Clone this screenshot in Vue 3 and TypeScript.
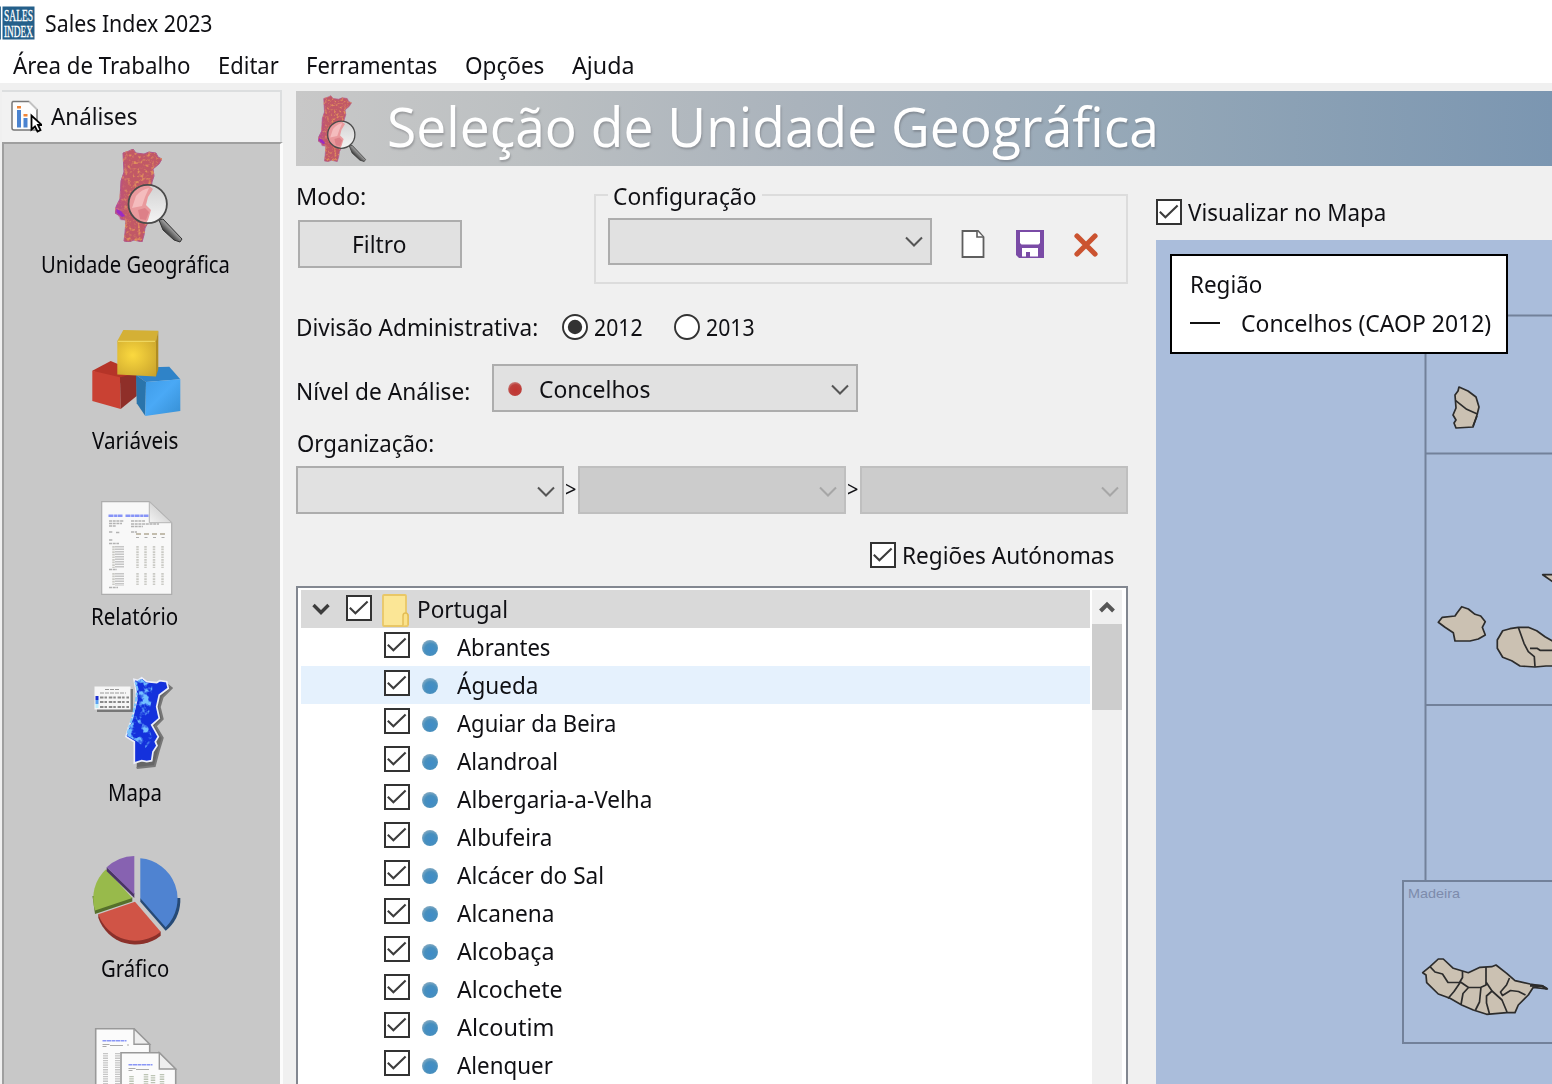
<script setup lang="ts">
import { ref } from 'vue'

interface Region {
  name: string
  width: number
}

const menus: Region[] = [
  { name: 'Área de Trabalho', width: 177 },
  { name: 'Editar', width: 60 },
  { name: 'Ferramentas', width: 130 },
  { name: 'Opções', width: 79 },
  { name: 'Ajuda', width: 61 },
]

const tools: Region[] = [
  { name: 'Unidade Geográfica', width: 187 },
  { name: 'Variáveis', width: 86 },
  { name: 'Relatório', width: 86 },
  { name: 'Mapa', width: 52 },
  { name: 'Gráfico', width: 68 },
  { name: '', width: 0 },
]

const regions: Region[] = [
  { name: 'Abrantes', width: 93 },
  { name: 'Águeda', width: 80 },
  { name: 'Aguiar da Beira', width: 158 },
  { name: 'Alandroal', width: 100 },
  { name: 'Albergaria-a-Velha', width: 194 },
  { name: 'Albufeira', width: 94 },
  { name: 'Alcácer do Sal', width: 146 },
  { name: 'Alcanena', width: 96 },
  { name: 'Alcobaça', width: 96 },
  { name: 'Alcochete', width: 105 },
  { name: 'Alcoutim', width: 96 },
  { name: 'Alenquer', width: 96 },
]

const hovered = ref('Águeda')
const year = ref('2012')

// Condenses a label so that its ink spans exactly the given width.
const vFit = {
  mounted(el: HTMLElement, binding: { value: number }) {
    if (!binding.value) return
    const ctx = document.createElement('canvas').getContext('2d')!
    const cs = getComputedStyle(el)
    ctx.font = `${cs.fontWeight} ${cs.fontSize} ${cs.fontFamily}`
    const m = ctx.measureText(el.textContent ?? '')
    const bearing = m.actualBoundingBoxLeft < 0 ? 1 : 0
    const ink = m.actualBoundingBoxLeft + m.actualBoundingBoxRight
    const scale = (binding.value - bearing) / ink
    const left = m.actualBoundingBoxLeft * scale + bearing
    el.style.transform = `scaleX(${scale})`
    el.style.marginLeft = `${left}px`
    el.style.marginRight = `${binding.value - el.offsetWidth - left}px`
  },
}
</script>

<template>
  <div class="app">
    <svg class="defs" width="0" height="0">
      <defs>
        <filter id="speckle" x="0" y="0" width="100%" height="100%" color-interpolation-filters="sRGB">
          <feTurbulence type="fractalNoise" baseFrequency=".3" numOctaves="2" seed="4" />
          <feColorMatrix values="0 0 0 0 .88  0 0 0 0 .56  0 0 0 0 .36  4 0 0 0 -2" />
          <feComposite in2="SourceGraphic" operator="in" result="dots" />
          <feMerge><feMergeNode in="SourceGraphic" /><feMergeNode in="dots" /></feMerge>
        </filter>
        <filter id="mottle" x="0" y="0" width="100%" height="100%" color-interpolation-filters="sRGB">
          <feTurbulence type="fractalNoise" baseFrequency=".13" numOctaves="3" seed="7" />
          <feColorMatrix values="0 0 0 0 .45  0 0 0 0 .75  0 0 0 0 1  5 0 0 0 -2.350" />
          <feComposite in2="SourceGraphic" operator="in" />
        </filter>
        <linearGradient id="violet" x1="0" y1="0" x2="1" y2="0">
          <stop offset="0" stop-color="#b13fb0" stop-opacity=".6" />
          <stop offset=".7" stop-color="#c35c68" stop-opacity="0" />
        </linearGradient>
        <linearGradient id="glass" x1="0" y1="0" x2="0" y2="1">
          <stop offset="0" stop-color="#d2d2d2" />
          <stop offset="1" stop-color="#f4f4f4" />
        </linearGradient>
        <linearGradient id="handle" x1="0" y1="1" x2="1" y2="0">
          <stop offset="0.3" stop-color="#222" />
          <stop offset="0.55" stop-color="#999" />
          <stop offset="0.8" stop-color="#333" />
        </linearGradient>
        <radialGradient id="yellow" cx=".4" cy=".4" r=".8">
          <stop offset="0" stop-color="#fbd93f" />
          <stop offset="1" stop-color="#c9a32c" />
        </radialGradient>
        <linearGradient id="fold" x1="0" y1="1" x2="1" y2="0">
          <stop offset="0" stop-color="#f4f4f4" />
          <stop offset="1" stop-color="#bdbdbd" />
        </linearGradient>
        <linearGradient id="azure" x1="0" y1="0" x2="1" y2="1">
          <stop offset="0" stop-color="#3f9ce8" />
          <stop offset=".45" stop-color="#4aa9f6" />
          <stop offset="1" stop-color="#368fd4" />
        </linearGradient>
        <symbol id="country" viewBox="0 0 96 96">
          <path d="M35 5l6-2 4-2 3 4 8 1 5-2 7 1 2 4 4 2-3 5-6 5 1 7-2 6-2 14 4 20-4 3-5 9-1 7-2 7-8-2-5 2-5-1 1-8 1-13-5-1-1-3-5-3 1-6 4-8 1-18 3-9z" fill="#c15866" stroke="#b0588c" stroke-width="1" filter="url(#speckle)" />
          <path d="M35 5l6-2 4-2 3 4 2 30-6 35-7 3-5-1-1-3-4-5 1-6 4-8 1-18 3-9z" fill="url(#violet)" />
          <path d="M28 61l5 2 4 5-3 1-5-4z" fill="#9a2bc4" />
          <path d="M71 72l4-1 19 20-2 3-6-2-11-10z" fill="url(#handle)" stroke="#333" stroke-width="1" />
          <circle cx="59.7" cy="56" r="19" fill="url(#glass)" />
          <path d="M42 49a19 19 0 0 1 18-12l5 4-5 8-2 8 5 5-3 10-2 3a19 19 0 0 1-17-20z" fill="#e99a9d" />
          <path d="M48 48q6-7 13-8l-4 9-3 9-10 2z" fill="#f4bcbd" />
          <path d="M50 62l7-2 4 4-3 8-6-1z" fill="#dd8088" />
          <circle cx="59.7" cy="56" r="19.2" fill="none" stroke="#4a4a4a" stroke-width="1.8" />
        </symbol>
        <symbol id="check" viewBox="0 0 26 26">
          <rect x="1" y="1" width="24" height="24" fill="#fff" stroke="#333" stroke-width="2" />
          <path d="M3.8 12.8l5.6 5.4L21.6 6.6" fill="none" stroke="#3c3c3c" stroke-width="2.1" />
        </symbol>
        <symbol id="arrow" viewBox="0 0 18 12">
          <path d="M1 1.5l8 8 8-8" fill="none" stroke="currentColor" stroke-width="2" />
        </symbol>
        <radialGradient id="blueDot" cx=".55" cy=".6" r=".62">
          <stop offset="0" stop-color="#3f8cc8" />
          <stop offset=".6" stop-color="#478fbe" />
          <stop offset="1" stop-color="#86abc2" />
        </radialGradient>
        <radialGradient id="redDot" cx=".55" cy=".6" r=".65">
          <stop offset="0" stop-color="#c23531" />
          <stop offset=".65" stop-color="#bd403c" />
          <stop offset="1" stop-color="#cf8e8b" />
        </radialGradient>
      </defs>
    </svg>

    <header class="titlebar">
      <svg class="logo" width="35" height="34" viewBox="0 0 35 34">
        <rect width="1" height="33" y="0.5" fill="#3d7396" />
        <rect x="2.5" y="0.5" width="32" height="33" fill="#245f8a" />
        <text x="4" y="15.200" textLength="29" lengthAdjust="spacingAndGlyphs" class="logo-text">SALES</text>
        <text x="4" y="30.500" textLength="29" lengthAdjust="spacingAndGlyphs" class="logo-text">INDEX</text>
      </svg>
      <span v-fit="167" class="t">Sales Index 2023</span>
    </header>

    <nav class="menubar">
      <span v-for="m in menus" :key="m.name" v-fit="m.width" class="t">{{ m.name }}</span>
    </nav>

    <div class="body">
      <aside class="sidebar">
        <div class="side-tab">
          <svg width="33" height="34" viewBox="0 0 33 34">
            <path d="M3.500 2.500H20l8 8v20.500H5q-2 0-2-2V4q0-1.500 1.500-1.500z" fill="#fdfdfd" stroke="#777" stroke-width="1.500" />
            <path d="M20 2.500l8 8" stroke="#ccc" stroke-width="1.500" />
            <rect x="8" y="7" width="4" height="2.500" fill="#f08437" />
            <rect x="8" y="11" width="4" height="17.500" fill="#4a83d0" />
            <rect x="14.500" y="15" width="4" height="2.500" fill="#f08437" />
            <rect x="14.500" y="19" width="4" height="9.500" fill="#4a83d0" />
            <path d="M22.500 16.500v14l3.500-3 2.500 5 3-1.500-2.500-5h3.800z" fill="#fff" stroke="#000" stroke-width="1.800" />
          </svg>
          <span v-fit="86" class="t">Análises</span>
        </div>
        <div class="side-list">
          <div v-for="(tool, i) in tools" :key="i" class="tool">
            <svg width="96" height="96" viewBox="0 0 96 96">
              <use v-if="i === 0" href="#country" width="96" height="96" />

              <g v-else-if="i === 1">
                <path d="M4.300 46.700L22.700 37l26 11v7l-16 4z" fill="#b53428" />
                <path d="M4.300 46.700L32 53.300 32.700 85 4.300 77z" fill="#c94133" />
                <path d="M32 53.300l16.700-4V72l-16 13z" fill="#8f2f29" />
                <path d="M48 51l15.700-7.700 17.600-.6 11 12.600L58 58z" fill="#2f83c8" />
                <path d="M48 51l10 7-.7 34-8.600-12.700z" fill="#2a74ab" />
                <path d="M58 58l34.300-2.700V87l-35 5z" fill="url(#azure)" />
                <path d="M29.300 17l6-11 35 .7L68 18z" fill="#d4b035" />
                <path d="M68 17l2.300-10.300V45L68 52.500z" fill="#b08c22" />
                <path d="M29.300 17H68v35.500l-38.700-2z" fill="url(#yellow)" />
                <path d="M30 17.300h37" stroke="#f3df6c" />
              </g>

              <g v-else-if="i === 2">
                <path d="M13.700 1.700h47.600l22.400 21v71.600h-70z" fill="#f8f8f8" stroke="#adadad" stroke-width="1.200" />
                <path d="M61.300 1.700v21h22.400z" fill="url(#fold)" stroke="#b5b5b5" />
                <path d="M20.500 15.700h14M37.500 15.700h23" stroke="#8794f7" stroke-width="2.500" stroke-dasharray="5 .6 3 .5" />
                <path d="M21 21h15M21 23.500h13M21 26h7M43 21h14M43 24h28M43 26.500h12M21 32h4M28 32.500h4M43 32h6M21 40h4M21 43.500h10M21 69.500h8M21 87.500h9" stroke="#b2b2b2" stroke-width="1.300" stroke-dasharray="3 .7" />
                <path d="M48 34h29" stroke="#c3bdae" stroke-width="2" stroke-dasharray="5 3" />
                <path d="M48 37.500h29" stroke="#adadad" stroke-width="1.200" stroke-dasharray="3 5.500" />
                <path d="M31.500 46v22M31.500 73v13" stroke="#c6c6c6" stroke-width="9" stroke-dasharray="1.500 1" />
                <path d="M25.500 46v22M25.500 73v13M49.500 46v22M57.500 46v22M66 46v22M74.500 46v22M49.500 73v13M57.500 73v13M66 73v13M74.500 73v13" stroke="#cacac5" stroke-width="2.500" stroke-dasharray="1.700 .9" />
              </g>

              <g v-else-if="i === 3">
                <path d="M50 7l3.700-3 5 4 10 1 10-1 5 4-9 9-3 10 3 12-7 7 7 12-4 13-4 15-18 2" fill="#666" stroke="#777" stroke-width="2" />
                <rect x="9" y="13" width="36" height="23" fill="#777" />
                <rect x="6.500" y="10.500" width="36" height="23" fill="#f6f6f6" />
                <path d="M17 13.500h15M12 17h26" stroke="#999" stroke-width="1.200" stroke-dasharray="4 1" />
                <path d="M12 21.500h29M12 26h29M12 31h29" stroke="#8a8a8a" stroke-width="2.200" stroke-dasharray="3.500 1 2.500 1.800" />
                <rect x="7.500" y="20" width="3" height="4" fill="#1a2fd0" />
                <rect x="7.500" y="24" width="3" height="4" fill="#5aa0f0" />
                <rect x="7.500" y="28" width="3" height="4" fill="#bdeefa" />
                <path d="M46 3.300l4 1 3.700-2.600 5 4 10 1 3-2 7 1 1.600 6.600-9 6.700-2.600 11.700 2.600 11.600-7.600 6.700 6.600 11.700-3 5 1.700 4-4 6-1.300 9-5 1-5-1-7.400 2.300V65.700L38 60.700l2.300-8.400 4.400-11.600 4-16.700-1-12z" fill="#1431dc" stroke="#eceef8" stroke-width="1.700" />
                <path d="M46.500 5l7-2 5 4 6 1-1 17-3 14-5 8 6 5 3 12-7 8-9-7-9-5 2.300-8.400 4.400-11.600 4-16.700z" fill="#1431dc" filter="url(#mottle)" />
                <path d="M47.500 6l2 7-1.500 11-3 15-4 13-2 8" fill="none" stroke="#7cc4fb" stroke-width="2" stroke-dasharray="3 1 5 2" />
              </g>

              <g v-else-if="i === 4">
                <path d="M52.300 46.300v3.500l25.400 29A40 40 0 0 0 92.300 50v-4z" fill="#264a76" />
                <path d="M52.300 46.300v-40a40.500 40.500 0 0 1 25.400 69z" fill="#4f83d1" />
                <path d="M10.300 62.300v3.500A39.500 39.500 0 0 0 72.700 83.700v-4z" fill="#8b302a" />
                <path d="M47 49.700l25.700 30A39.500 39.500 0 0 1 10.300 62.300z" fill="#d05446" />
                <path d="M4.500 44l2.500 18 37.300-12.500v-4z" fill="#55702b" />
                <path d="M44.300 46L18 17.300A40 40 0 0 0 7 58.500z" fill="#98ba4b" />
                <path d="M18.700 15.300v4L46.300 46v-5z" fill="#493463" />
                <path d="M46.300 42.500V4a42 42 0 0 0-27.600 11.300z" fill="#8762b1" />
              </g>

              <g v-else>
                <path d="M7.700.8H46l15.700 15.500V120h-54z" fill="#fbfbfb" stroke="#999" stroke-width="1.600" />
                <path d="M46 .8v15.500h15.700z" fill="#eee" stroke="#999" stroke-width="1.400" />
                <path d="M14.500 12.800h24" stroke="#8a97f7" stroke-width="1.500" stroke-dasharray="4 .5" />
                <path d="M14.500 16.500h7M14.500 18.500h4M22 17.500h13M39 17h2" stroke="#aaa" />
                <path d="M17.500 25v40M29.500 25v40" stroke="#c6c6c6" stroke-width="5" stroke-dasharray="1.300 1" />
                <path d="M33 24.700h38.300L87.700 41v60H33z" fill="#fbfbfb" stroke="#999" stroke-width="1.600" />
                <path d="M71.300 24.700V41h16.400z" fill="#eee" stroke="#999" stroke-width="1.400" />
                <path d="M40.500 36.800h24" stroke="#8a97f7" stroke-width="1.500" stroke-dasharray="4 .5" />
                <path d="M40.500 40.500h7M40.500 42.500h4M48 41.500h13" stroke="#aaa" />
                <path d="M43.500 48v20M58 46v20M65 47v20M74 46v20" stroke="#bcc4b4" stroke-width="4.500" stroke-dasharray="1.300 1" />
              </g>
            </svg>
            <div class="tool-label"><span v-fit="tool.width" class="t side">{{ tool.name }}</span></div>
          </div>
        </div>
      </aside>

      <main class="main">
        <div class="banner">
          <svg class="banner-icon" width="68" height="68"><use href="#country" width="68" height="68" /></svg>
          <h1><span v-fit="767" class="t">Seleção de Unidade Geográfica</span></h1>
        </div>

        <div class="columns">
          <section class="form">
            <div class="row-top">
              <div class="mode">
                <div class="label"><span v-fit="68" class="t">Modo:</span></div>
                <button class="btn"><span v-fit="53" class="t">Filtro</span></button>
              </div>
              <div class="group">
                <div class="legend"><span v-fit="143" class="t">Configuração</span></div>
                <div class="combo config"><svg class="chev" width="18" height="12"><use href="#arrow" /></svg></div>
                <svg class="g1" width="24" height="28" viewBox="0 0 24 28">
                  <path d="M1.500 1H17l5.500 6v20h-21z" fill="#fff" stroke="#5e5e5e" stroke-width="1.800" />
                  <path d="M16 1v6h6" fill="#fff" stroke="#5e5e5e" stroke-width="1.600" />
                </svg>
                <svg class="g2" width="28" height="28" viewBox="0 0 28 28">
                  <path d="M0 0h28v28H3l-3-3z" fill="#7a4ba6" />
                  <path d="M4 2h20v11l-1.500 1.500h-17L4 13z" fill="#fff" />
                  <path d="M6 18h16v8.500h-8V22h-4v4.500H6z" fill="#fff" />
                </svg>
                <svg class="g3" width="24" height="24" viewBox="0 0 24 24">
                  <path d="M3 3l18 18m0-18L3 21" stroke="#cb5330" stroke-width="5.200" stroke-linecap="round" />
                </svg>
              </div>
            </div>

            <div class="row-div">
              <span v-fit="240" class="t">Divisão Administrativa:</span>
              <svg class="r1" width="26" height="26" viewBox="0 0 26 26">
                <circle cx="13" cy="13" r="12" fill="#fff" stroke="#333" stroke-width="1.900" />
                <circle v-if="year === '2012'" cx="13" cy="13" r="7.200" fill="#333" />
              </svg>
              <span v-fit="48" class="t">2012</span>
              <svg class="r2" width="26" height="26" viewBox="0 0 26 26">
                <circle cx="13" cy="13" r="12" fill="#fff" stroke="#333" stroke-width="1.900" />
                <circle v-if="year === '2013'" cx="13" cy="13" r="7.200" fill="#333" />
              </svg>
              <span v-fit="48" class="t">2013</span>
            </div>

            <div class="row-level">
              <div class="level-label"><span v-fit="172" class="t">Nível de Análise:</span></div>
              <div class="combo level">
                <svg class="dot" width="14" height="14"><circle cx="7" cy="7" r="6.900" fill="url(#redDot)" /></svg>
                <span v-fit="111" class="t">Concelhos</span>
                <svg class="chev" width="18" height="12"><use href="#arrow" /></svg>
              </div>
            </div>

            <div class="org-label"><span v-fit="136" class="t">Organização:</span></div>
            <div class="row-org">
              <div class="combo"><svg class="chev" width="18" height="12"><use href="#arrow" /></svg></div>
              <span class="gt"><span v-fit="11" class="t">&gt;</span></span>
              <div class="combo off"><svg class="chev" width="18" height="12"><use href="#arrow" /></svg></div>
              <span class="gt"><span v-fit="11" class="t">&gt;</span></span>
              <div class="combo off"><svg class="chev" width="18" height="12"><use href="#arrow" /></svg></div>
            </div>

            <div class="row-auto">
              <svg width="26" height="26"><use href="#check" /></svg>
              <span v-fit="211" class="t">Regiões Autónomas</span>
            </div>

            <div class="tree">
              <div class="rows">
                <div class="row root">
                  <svg class="twist" width="18" height="12" viewBox="0 0 18 12"><path d="M1.500 2L9 9.500 16.500 2" fill="none" stroke="#3c3c3c" stroke-width="3.400" /></svg>
                  <svg class="box" width="26" height="26"><use href="#check" /></svg>
                  <svg class="folder" width="27" height="33" viewBox="0 0 27 33">
                    <path d="M1 2q0-1 1-1h21q1 0 1 1v17l2 2v10q0 1-1 1H2q-1 0-1-1z" fill="#fbe696" stroke="#e9c766" stroke-width="1.800" />
                    <path d="M21 31.500V22q0-3 2.500-3t2.500 3v9" fill="#fbe28a" stroke="#e3bd55" stroke-width="1.400" />
                  </svg>
                  <span v-fit="89" class="t">Portugal</span>
                </div>
                <div v-for="r in regions" :key="r.name" class="row leaf" :class="{ hover: r.name === hovered }">
                  <svg class="box" width="26" height="26"><use href="#check" /></svg>
                  <svg class="dot" width="16" height="16"><circle cx="8" cy="8" r="8" fill="url(#blueDot)" /></svg>
                  <span v-fit="r.width" class="t">{{ r.name }}</span>
                </div>
              </div>
              <div class="scroll">
                <div class="scroll-up">
                  <svg width="16" height="14" viewBox="0 0 16 14"><path d="M1.500 11L8 4.500l6.500 6.500" fill="none" stroke="#555" stroke-width="4" /></svg>
                </div>
                <div class="thumb"></div>
              </div>
            </div>
          </section>

          <section class="preview">
            <div class="show-map">
              <svg width="26" height="26"><use href="#check" /></svg>
              <span v-fit="197" class="t">Visualizar no Mapa</span>
            </div>
            <div class="map">
              <svg width="396" height="844" viewBox="0 0 396 844">
                <g fill="none" stroke="#72819a" stroke-width="2">
                  <path d="M396 75.500H269.500V641M270 213.500h126M270 465h126" />
                  <path d="M400 641H247v162h153" />
                </g>
                <text x="252" y="657.500" textLength="52" lengthAdjust="spacingAndGlyphs" class="place">Madeira</text>
                <g fill="#cbc1b2" stroke="#2c2c2c" stroke-width="1.700" stroke-linejoin="round">
                  <path d="M303 147l9 4 8 6 3 10-2 8-4 12-17 1-2-5 2-3-3-5 3-7-1-13 3-4z" />
                  <path d="M299.700 160.700l11 8.600 10.600 4.700M321 176l-4 10" fill="none" />
                  <path d="M282.300 382.300l4-5 12.700-1.300 2-3 4.700-6.300 6.600 2.300 6.700 5.300 5.700 1.700 4.600 5.700-3 5.600 3 7.700-7 4-8.300 2h-15l-1.700-8.300-8.300-5.400z" />
                  <path d="M362.300 387.300h10l8.400 3.400 8.300 6L398 402v24h-8l-11 1-15-1-8.300-5.300-9-3.400-5.400-9V400l5.400-9.300 7.300-2z" />
                  <path d="M362.300 387.300l5.700 16 4.300 8.400 6 5 .7 10M374 408.300l7 0 3 2h14" fill="none" />
                  <path d="M386.700 334.700H400V344z" />
                  <path d="M266.700 732.700l7.300-6 8.300-7.700h5l10 9.300 8.400 2.400 6.600 2 11.700-5.400 11.700-.6 4.300-1.700 10.700 8.300 8.300 7.400 15 3.300 12.700 2 4.600 3-14-1.700-5 7.700-10 10-3.300 7.700h-8.300l-20 1.600-13.400-4.300-11.600-5-11.700-6.700-11.700-4.300-11.600-11.300-.7-7.700z" />
                  <path d="M274 726.700l5 5.300 7.500 2 5.500 8.500h11.500l3-5V731M292 758.500l6-7 6.500-9.500 8 5.500h12l5.500-2.500V727M312.500 747.500l-5.500 6-2 11M325 747l-1.500 15-4 8M330 742l6 9-5.500 5v7l3 11M336 751l10 9 5 12M353.500 738l-3 7-6 7 2 3.500 8-5 8 1 7 3.500" fill="none" />
                  <path d="M374 745.500l12 .5 5 3" fill="none" stroke-width="2.600" />
                </g>
              </svg>
              <div class="map-legend">
                <div class="heading"><span v-fit="71" class="t">Região</span></div>
                <div class="entry"><i></i><span v-fit="250" class="t">Concelhos (CAOP 2012)</span></div>
              </div>
            </div>
          </section>
        </div>
      </main>
    </div>
  </div>
</template>

<style>
html,
body {
  margin: 0;
  overflow: hidden;
  background: #f0f0f0;
}
</style>

<style scoped>
.app {
  width: 1552px;
  height: 1084px;
  overflow: hidden;
  display: flex;
  flex-direction: column;
  background: #f0f0f0;
  color: #101014;
  font-family: 'Noto Sans', 'Open Sans', sans-serif;
  font-size: 24px;
  line-height: 30px;
}
.app * {
  box-sizing: border-box;
}
svg {
  display: block;
  flex: none;
}
.defs {
  position: absolute;
}
.t {
  display: inline-block;
  flex: none;
  white-space: nowrap;
  transform-origin: 0 50%;
}
.side {
  color: #08080c;
}
.titlebar {
  height: 47px;
  flex: none;
  display: flex;
  align-items: center;
  gap: 10px;
  padding-bottom: 1px;
  background: #fff;
}
.logo {
  margin-top: -1px;
  overflow: visible;
}
.logo-text {
  font: 16px 'Liberation Serif', serif;
  fill: #fff;
  stroke: #fff;
  stroke-width: 0.3px;
}
.menubar {
  height: 36px;
  flex: none;
  display: flex;
  align-items: center;
  gap: 28px;
  padding: 0 0 0 13px;
  background: #fff;
}
.body {
  flex: 1;
  min-height: 0;
  display: flex;
}
.sidebar {
  width: 283px;
  flex: none;
  display: flex;
  flex-direction: column;
  padding: 7px 0 0 2px;
}
.side-tab {
  height: 52px;
  flex: none;
  width: 280px;
  display: flex;
  align-items: center;
  gap: 9px;
  padding: 0 0 3px 7px;
  border: 2px solid #dcdedf;
  border-left: 0;
  border-bottom: 0;
  background: #f2f2f2;
}
.side-list {
  flex: 1;
  min-height: 0;
  overflow: hidden;
  border-left: 2px solid #9f9f9f;
  border-top: 2px solid #9f9f9f;
  border-right: 3px solid #fcfcfc;
  background: #c8c8c8;
}
.tool {
  height: 176px;
  display: flex;
  flex-direction: column;
  align-items: center;
  padding: 4px 12px 0 0;
}
.tool-label {
  height: 30px;
  margin: 5px 2px 0 0;
  display: flex;
}
.main {
  flex: 1;
  min-width: 0;
  padding: 8px 0 0 13px;
  display: flex;
  flex-direction: column;
}
.banner {
  height: 75px;
  flex: none;
  display: flex;
  align-items: center;
  padding-left: 3px;
  background: linear-gradient(90deg, #c8c8c8 0%, #bcc0c2 18%, #aab3bc 40%, #94a7b7 68%, #7b96b1 100%);
}
h1 {
  display: flex;
  margin: 0 0 0 21px;
  height: 75px;
  font-size: 54px;
  font-weight: 400;
  font-family: 'Open Sans', 'Noto Sans', sans-serif;
  line-height: 71px;
  color: #fff;
  text-shadow: 1px 2px 2px rgba(80, 80, 85, 0.35);
}
.columns {
  flex: 1;
  min-height: 0;
  display: flex;
  gap: 28px;
}
.form {
  width: 832px;
  flex: none;
  display: flex;
  flex-direction: column;
}
.row-top {
  height: 118px;
  flex: none;
  display: flex;
  justify-content: space-between;
  align-items: flex-start;
}
.label {
  display: flex;
  padding-left: 1px;
  margin-top: 15px;
  height: 29px;
}
.btn {
  display: flex;
  align-items: center;
  justify-content: center;
  width: 164px;
  height: 48px;
  margin: 10px 0 0 2px;
  padding: 0 0 1px 0;
  border: 2px solid #adadad;
  background: #e1e1e1;
  font: inherit;
  color: inherit;
}
.group {
  width: 534px;
  height: 90px;
  margin-top: 28px;
  border: 2px solid #dcdcdc;
  display: flex;
  align-items: flex-start;
  position: relative;
}
.legend {
  position: absolute;
  left: 12px;
  top: -15px;
  display: flex;
  padding: 0 6px 0 5px;
  background: #f0f0f0;
}
.combo {
  height: 48px;
  display: flex;
  align-items: center;
  border: 2px solid #adadad;
  background: #e1e1e1;
  color: #555;
}
.combo .t {
  color: #101014;
}
.combo .chev {
  margin-left: auto;
  margin-right: 7px;
  margin-top: 3px;
}
.off {
  background: #ccc;
  border-color: #bfbfbf;
  color: #a6a6a6;
}
.config {
  width: 324px;
  height: 47px;
  margin: 22px 0 0 12px;
}
.config .chev {
  margin-top: 1px;
}
.g1 {
  margin: 34px 0 0 29px;
}
.g2 {
  margin: 34px 0 0 31px;
}
.g3 {
  margin: 37px 0 0 30px;
}
.row-div {
  height: 50px;
  flex: none;
  margin-top: 19px;
  display: flex;
  align-items: center;
  padding: 0 0 2px 1px;
}
.r1 {
  margin: 0 6px 0 25px;
}
.r2 {
  margin: 0 6px 0 32px;
}
.row-level {
  height: 48px;
  flex: none;
  margin-top: 11px;
  display: flex;
}
.level-label {
  width: 196px;
  display: flex;
  align-items: center;
  padding: 6px 0 0 1px;
}
.level {
  width: 366px;
  padding-left: 14px;
}
.level .t {
  position: relative;
  top: 1px;
}
.level .dot {
  margin: 2px 17px 0 0;
}
.org-label {
  height: 54px;
  flex: none;
  padding: 16px 0 0 1px;
  display: flex;
}
.row-org {
  height: 48px;
  flex: none;
  display: flex;
}
.row-org .combo {
  width: 268px;
}
.gt {
  width: 14px;
  display: flex;
  justify-content: center;
  padding: 8px 1px 0 0;
  font-size: 22px;
  line-height: 28px;
}
.row-auto {
  height: 72px;
  flex: none;
  display: flex;
  align-items: center;
  gap: 7px;
  padding: 10px 0 0 574px;
}
.tree {
  flex: 1;
  min-height: 0;
  overflow: hidden;
  display: flex;
  border: 2px solid #828790;
  border-bottom: 0;
  background: #fff;
  padding: 2px 3px 0 3px;
}
.rows {
  width: 789px;
  flex: none;
}
.row {
  height: 38px;
  display: flex;
  align-items: center;
}
.root {
  background: #d9d9d9;
  padding-left: 11px;
}
.root .box {
  margin: -3px 0 0 16px;
}
.folder {
  margin: 2px 9px 0 10px;
}
.leaf {
  padding-left: 83px;
}
.leaf .box {
  margin-top: -4px;
}
.leaf .dot {
  margin: 2px 19px 0 12px;
}
.hover {
  background: #e5f1fd;
}
.scroll {
  width: 30px;
  margin-left: 2px;
  background: #f0f0f0;
}
.scroll-up {
  height: 34px;
  display: flex;
  align-items: center;
  justify-content: center;
}
.thumb {
  height: 86px;
  background: #cdcdcd;
}
.preview {
  flex: 1;
  min-width: 0;
  display: flex;
  flex-direction: column;
}
.show-map {
  height: 74px;
  flex: none;
  display: flex;
  align-items: center;
  gap: 6px;
  padding-top: 17px;
}
.map {
  flex: 1;
  position: relative;
  background: #aabddb;
}
.place {
  font: 13px 'Liberation Sans', sans-serif;
  fill: #7d8bab;
}
.map-legend {
  position: absolute;
  left: 14px;
  top: 14px;
  width: 338px;
  height: 100px;
  border: 2px solid #000;
  background: #fff;
  padding: 13px 0 0 18px;
}
.map-legend > div {
  display: flex;
  align-items: center;
  height: 30px;
}
.map-legend .heading {
  padding-left: 1px;
}
.map-legend .entry {
  margin-top: 9px;
}
.entry i {
  width: 30px;
  height: 2px;
  margin-right: 21px;
  background: #111;
}
</style>
